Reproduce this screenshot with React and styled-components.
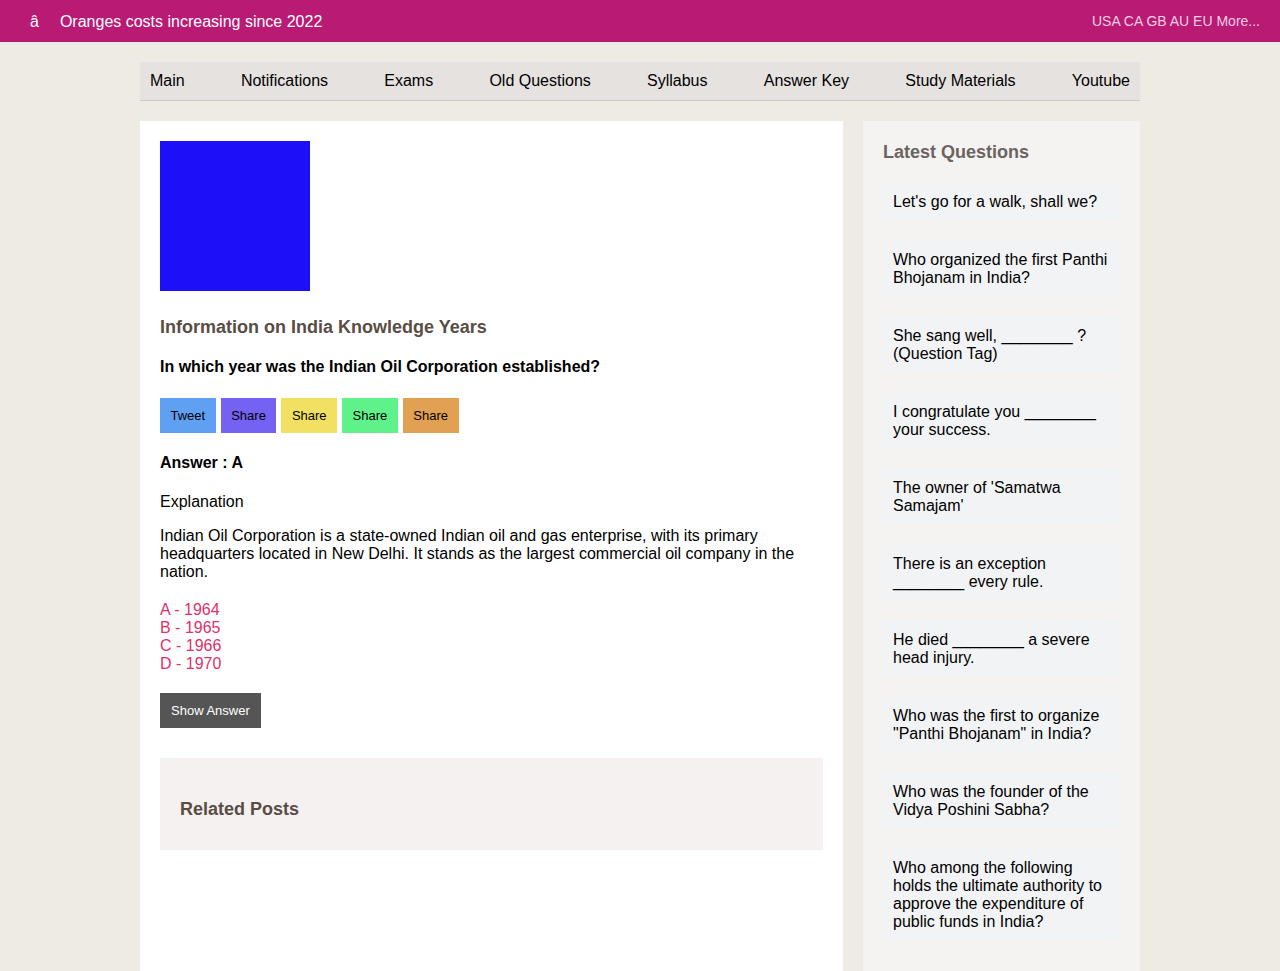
import styled, { createGlobalStyle } from "styled-components"

const GlobalStyle = createGlobalStyle`
    body {
        margin: 0;
        background-color: #eeebe4;
        font-family: "Liberation Sans", Arial, sans-serif;
        color: #000;
    }
`

const TopBar = styled.header`
    height: 42px;
    background-color: #b91a74;
    display: flex;
    align-items: center;
    justify-content: space-between;
    padding: 0 20px 0 30px;
`

const Ticker = styled.div`
    display: flex;
    align-items: center;
    gap: 21px;
    color: #fff;
    font-size: 16px;
    padding-top: 1px;
`

const Regions = styled.div`
    color: #f2cfe2;
    font-size: 14px;
`

const Wrapper = styled.div`
    width: 1000px;
    margin: 20px auto 0;
`

const Nav = styled.nav`
    height: 38px;
    background-color: #e6e2e0;
    border-bottom: 1px solid #cbc7c5;
    display: flex;
    align-items: center;
    justify-content: space-between;
    padding: 0 10px;
    margin-bottom: 20px;
`

const NavLink = styled.a`
    font-size: 16px;
    color: #000;
    text-decoration: none;
`

const Columns = styled.div`
    display: flex;
    gap: 20px;
    align-items: stretch;
    min-height: 870px;
`

const Main = styled.main`
    flex: 0 0 703px;
    box-sizing: border-box;
    background-color: #fff;
    padding: 20px;
`

const Thumb = styled.div`
    width: 150px;
    height: 150px;
    background-color: #1d0ff8;
    margin-bottom: 26px;
`

const Heading = styled.h2`
    margin: 0 0 ${p => p.$gap ?? 20}px;
    font-size: 18px;
    line-height: 21px;
    font-weight: bold;
    color: ${p => p.$tone || "#5a4d46"};
`

const Question = styled.p`
    margin: 0 0 22px;
    font-size: 16px;
    line-height: 18px;
    font-weight: bold;
`

const ShareRow = styled.div`
    display: flex;
    gap: 5px;
    margin-bottom: 21px;
`

const ShareButton = styled.button`
    height: 35px;
    padding: 0 10.5px;
    border: none;
    background-color: ${p => p.$bg};
    color: #000;
    font-family: inherit;
    font-size: 13px;
`

const Answer = styled.p`
    margin: 0 0 21px;
    font-size: 16px;
    line-height: 18px;
    font-weight: bold;
`

const Text = styled.p`
    margin: 0 0 ${p => p.$gap || 16}px;
    font-size: 16px;
    line-height: 18px;
`

const Options = styled.div`
    color: #e0306a;
    font-size: 16px;
    line-height: 18px;
    margin-bottom: 20px;
`

const RevealButton = styled.button`
    height: 35px;
    padding: 0 11px;
    border: none;
    background-color: #555;
    color: #fff;
    font-family: inherit;
    font-size: 13px;
    margin-bottom: 30px;
`

const Related = styled.section`
    background-color: #f4f1f0;
    padding: 41px 20px 30px;
`

const Sidebar = styled.aside`
    flex: 1;
    background-color: #f5f3f1;
    padding: 21px 20px 20px;
`

const QuestionList = styled.div`
    display: flex;
    flex-direction: column;
    gap: 20px;
`

const QuestionItem = styled.div`
    background-color: #f2f3f5;
    padding: 10px;
    font-size: 16px;
    line-height: 18px;
`

const links = ["Main", "Notifications", "Exams", "Old Questions", "Syllabus", "Answer Key", "Study Materials", "Youtube"]

const shares = [
    { label: "Tweet", bg: "#5fa0f2" },
    { label: "Share", bg: "#7462f2" },
    { label: "Share", bg: "#f2e062" },
    { label: "Share", bg: "#60f28a" },
    { label: "Share", bg: "#e2a052" },
]

const latest = [
    "Let's go for a walk, shall we?",
    "Who organized the first Panthi Bhojanam in India?",
    "She sang well, ________ ? (Question Tag)",
    "I congratulate you ________ your success.",
    "The owner of 'Samatwa Samajam'",
    "There is an exception ________ every rule.",
    "He died ________ a severe head injury.",
    "Who was the first to organize \"Panthi Bhojanam\" in India?",
    "Who was the founder of the Vidya Poshini Sabha?",
    "Who among the following holds the ultimate authority to approve the expenditure of public funds in India?",
]

const App = () => {
    return (
        <>
            <GlobalStyle />
            <TopBar>
                <Ticker>
                    <span>â</span>
                    <span>Oranges costs increasing since 2022</span>
                </Ticker>
                <Regions>USA CA GB AU EU More...</Regions>
            </TopBar>
            <Wrapper>
                <Nav>
                    {links.map(l => <NavLink key={l} href="#">{l}</NavLink>)}
                </Nav>
                <Columns>
                    <Main>
                        <Thumb />
                        <Heading>Information on India Knowledge Years</Heading>
                        <Question>In which year was the Indian Oil Corporation established?</Question>
                        <ShareRow>
                            {shares.map((s, i) => <ShareButton key={i} $bg={s.bg}>{s.label}</ShareButton>)}
                        </ShareRow>
                        <Answer>Answer : A</Answer>
                        <Text>Explanation</Text>
                        <Text $gap={20}>
                            Indian Oil Corporation is a state-owned Indian oil and gas enterprise, with its primary headquarters located in New Delhi. It stands as the largest commercial oil company in the nation.
                        </Text>
                        <Options>
                            <div>A - 1964</div>
                            <div>B - 1965</div>
                            <div>C - 1966</div>
                            <div>D - 1970</div>
                        </Options>
                        <RevealButton>Show Answer</RevealButton>
                        <Related>
                            <Heading $gap={0}>Related Posts</Heading>
                        </Related>
                    </Main>
                    <Sidebar>
                        <Heading $tone="#6b6360" $gap={20}>Latest Questions</Heading>
                        <QuestionList>
                            {latest.map(q => <QuestionItem key={q}>{q}</QuestionItem>)}
                        </QuestionList>
                    </Sidebar>
                </Columns>
            </Wrapper>
        </>
    )
}

export default App
